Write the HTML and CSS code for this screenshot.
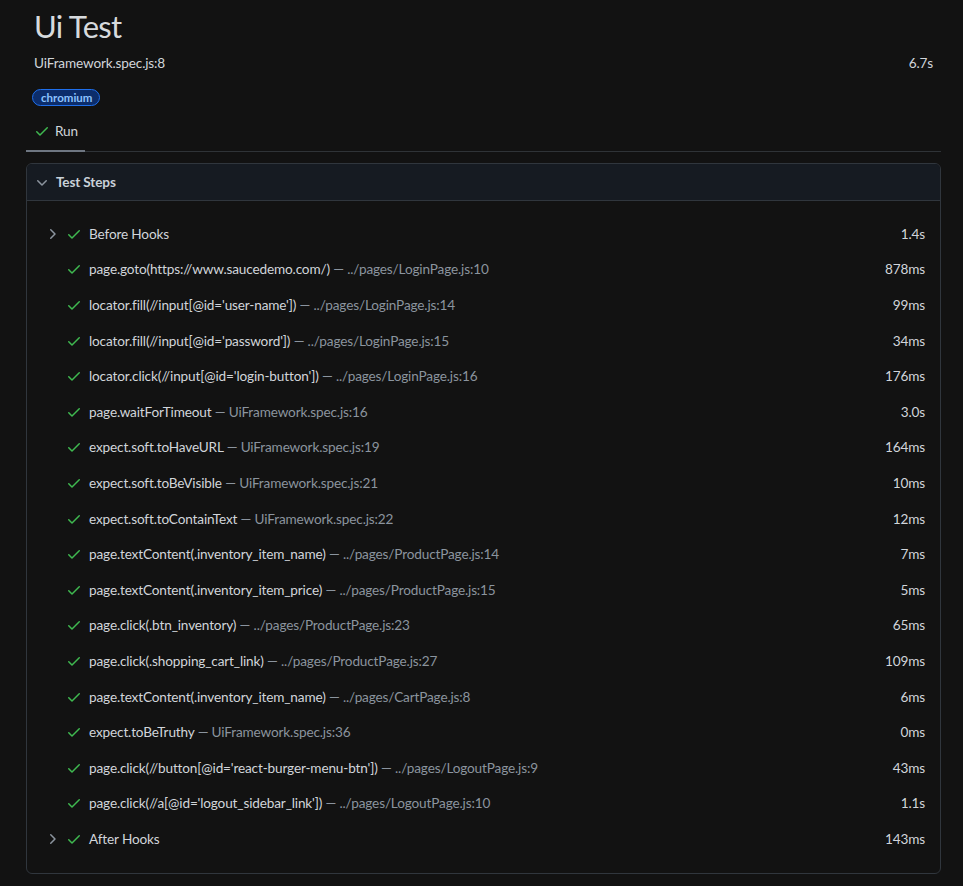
FILE: index.html
```html
<!DOCTYPE html>
<html lang="en">
<head>
<meta charset="utf-8">
<title>Ui Test</title>
<link rel="stylesheet" href="styles.css">
</head>
<body>
<div class="page">
  <div class="title">Ui Test</div>
  <div class="subtitle-row">
    <span class="location">UiFramework.spec.js:8</span>
    <span class="duration">6.7s</span>
  </div>
  <div class="labels"><span class="badge">chromium</span></div>
  <div class="tabs">
    <div class="tab selected">
      <svg class="icon check" viewBox="0 0 16 16" width="16" height="16"><path d="M13.78 4.22a.75.75 0 010 1.06l-7.250 7.25a.75.75 0 01-1.06 0L2.22 9.28a.75.75 0 011.06-1.06L6 10.94l6.72-6.72a.75.75 0 011.06 0z"/></svg>
      <span>Run</span>
    </div>
  </div>
  <div class="card">
    <div class="card-header">
      <svg class="icon chev" viewBox="0 0 16 16" width="16" height="16"><path d="M12.78 6.22a.75.75 0 010 1.06l-4.25 4.25a.75.75 0 01-1.06 0L3.22 7.28a.75.75 0 011.06-1.06L8 9.94l3.72-3.720a.75.75 0 011.06 0z"/></svg>
      <span>Test Steps</span>
    </div>
    <div class="card-body">
      <div class="step"><svg class="icon chev" viewBox="0 0 16 16" width="16" height="16"><path d="M6.22 3.22a.75.75 0 011.06 0l4.25 4.25a.75.75 0 010 1.06l-4.25 4.25a.75.75 0 01-1.06-1.06L9.94 8 6.22 4.28a.75.75 0 010-1.06z"/></svg><svg class="icon check" viewBox="0 0 16 16" width="16" height="16"><path d="M13.78 4.22a.75.75 0 010 1.06l-7.25 7.25a.75.75 0 01-1.06 0L2.22 9.28a.75.75 0 011.06-1.06L6 10.94l6.72-6.72a.75.75 0 011.06 0z"/></svg><span class="step-title">Before Hooks</span><span class="step-time">1.4s</span></div>
      <div class="step"><span class="spacer"></span><svg class="icon check" viewBox="0 0 16 16" width="16" height="16"><path d="M13.78 4.22a.75.75 0 010 1.06l-7.25 7.25a.75.75 0 01-1.06 0L2.22 9.28a.75.75 0 011.06-1.06L6 10.94l6.72-6.72a.75.75 0 011.06 0z"/></svg><span class="step-title">page.goto(https://www.saucedemo.com/)<span class="loc"> — ../pages/LoginPage.js:10</span></span><span class="step-time">878ms</span></div>
      <div class="step"><span class="spacer"></span><svg class="icon check" viewBox="0 0 16 16" width="16" height="16"><path d="M13.78 4.22a.75.75 0 010 1.06l-7.25 7.25a.75.75 0 01-1.06 0L2.22 9.28a.75.75 0 011.06-1.06L6 10.94l6.72-6.72a.75.75 0 011.06 0z"/></svg><span class="step-title">locator.fill(//input[@id='user-name'])<span class="loc"> — ../pages/LoginPage.js:14</span></span><span class="step-time">99ms</span></div>
      <div class="step"><span class="spacer"></span><svg class="icon check" viewBox="0 0 16 16" width="16" height="16"><path d="M13.78 4.22a.75.75 0 010 1.06l-7.25 7.25a.75.75 0 01-1.06 0L2.22 9.28a.75.75 0 011.06-1.06L6 10.94l6.72-6.72a.75.75 0 011.06 0z"/></svg><span class="step-title">locator.fill(//input[@id='password'])<span class="loc"> — ../pages/LoginPage.js:15</span></span><span class="step-time">34ms</span></div>
      <div class="step"><span class="spacer"></span><svg class="icon check" viewBox="0 0 16 16" width="16" height="16"><path d="M13.78 4.22a.75.75 0 010 1.06l-7.25 7.25a.75.75 0 01-1.06 0L2.22 9.28a.75.75 0 011.06-1.06L6 10.94l6.72-6.72a.75.75 0 011.06 0z"/></svg><span class="step-title">locator.click(//input[@id='login-button'])<span class="loc"> — ../pages/LoginPage.js:16</span></span><span class="step-time">176ms</span></div>
      <div class="step"><span class="spacer"></span><svg class="icon check" viewBox="0 0 16 16" width="16" height="16"><path d="M13.78 4.22a.75.75 0 010 1.06l-7.25 7.25a.75.75 0 01-1.06 0L2.22 9.28a.75.75 0 011.06-1.06L6 10.94l6.72-6.72a.75.75 0 011.06 0z"/></svg><span class="step-title">page.waitForTimeout<span class="loc"> — UiFramework.spec.js:16</span></span><span class="step-time">3.0s</span></div>
      <div class="step"><span class="spacer"></span><svg class="icon check" viewBox="0 0 16 16" width="16" height="16"><path d="M13.78 4.22a.75.75 0 010 1.06l-7.25 7.25a.75.75 0 01-1.06 0L2.22 9.28a.75.75 0 011.06-1.06L6 10.94l6.72-6.72a.75.75 0 011.06 0z"/></svg><span class="step-title">expect.soft.toHaveURL<span class="loc"> — UiFramework.spec.js:19</span></span><span class="step-time">164ms</span></div>
      <div class="step"><span class="spacer"></span><svg class="icon check" viewBox="0 0 16 16" width="16" height="16"><path d="M13.78 4.22a.75.75 0 010 1.06l-7.25 7.25a.75.75 0 01-1.06 0L2.22 9.28a.75.75 0 011.06-1.06L6 10.94l6.72-6.72a.75.75 0 011.06 0z"/></svg><span class="step-title">expect.soft.toBeVisible<span class="loc"> — UiFramework.spec.js:21</span></span><span class="step-time">10ms</span></div>
      <div class="step"><span class="spacer"></span><svg class="icon check" viewBox="0 0 16 16" width="16" height="16"><path d="M13.78 4.22a.75.75 0 010 1.06l-7.25 7.25a.75.75 0 01-1.06 0L2.22 9.28a.75.75 0 011.06-1.06L6 10.94l6.72-6.72a.75.75 0 011.06 0z"/></svg><span class="step-title">expect.soft.toContainText<span class="loc"> — UiFramework.spec.js:22</span></span><span class="step-time">12ms</span></div>
      <div class="step"><span class="spacer"></span><svg class="icon check" viewBox="0 0 16 16" width="16" height="16"><path d="M13.78 4.22a.75.75 0 010 1.06l-7.25 7.25a.75.75 0 01-1.06 0L2.22 9.28a.75.75 0 011.06-1.06L6 10.94l6.72-6.72a.75.75 0 011.06 0z"/></svg><span class="step-title">page.textContent(.inventory_item_name)<span class="loc"> — ../pages/ProductPage.js:14</span></span><span class="step-time">7ms</span></div>
      <div class="step"><span class="spacer"></span><svg class="icon check" viewBox="0 0 16 16" width="16" height="16"><path d="M13.78 4.22a.75.75 0 010 1.06l-7.25 7.25a.75.75 0 01-1.06 0L2.22 9.28a.75.75 0 011.06-1.06L6 10.94l6.72-6.72a.75.75 0 011.06 0z"/></svg><span class="step-title">page.textContent(.inventory_item_price)<span class="loc"> — ../pages/ProductPage.js:15</span></span><span class="step-time">5ms</span></div>
      <div class="step"><span class="spacer"></span><svg class="icon check" viewBox="0 0 16 16" width="16" height="16"><path d="M13.78 4.22a.75.75 0 010 1.06l-7.25 7.25a.75.75 0 01-1.06 0L2.22 9.28a.75.75 0 011.06-1.06L6 10.94l6.72-6.72a.75.75 0 011.06 0z"/></svg><span class="step-title">page.click(.btn_inventory)<span class="loc"> — ../pages/ProductPage.js:23</span></span><span class="step-time">65ms</span></div>
      <div class="step"><span class="spacer"></span><svg class="icon check" viewBox="0 0 16 16" width="16" height="16"><path d="M13.78 4.22a.75.75 0 010 1.06l-7.25 7.25a.75.75 0 01-1.06 0L2.22 9.28a.75.75 0 011.06-1.06L6 10.94l6.72-6.72a.75.75 0 011.06 0z"/></svg><span class="step-title">page.click(.shopping_cart_link)<span class="loc"> — ../pages/ProductPage.js:27</span></span><span class="step-time">109ms</span></div>
      <div class="step"><span class="spacer"></span><svg class="icon check" viewBox="0 0 16 16" width="16" height="16"><path d="M13.78 4.22a.75.75 0 010 1.06l-7.25 7.25a.75.75 0 01-1.06 0L2.22 9.28a.75.75 0 011.06-1.06L6 10.94l6.72-6.72a.75.75 0 011.06 0z"/></svg><span class="step-title">page.textContent(.inventory_item_name)<span class="loc"> — ../pages/CartPage.js:8</span></span><span class="step-time">6ms</span></div>
      <div class="step"><span class="spacer"></span><svg class="icon check" viewBox="0 0 16 16" width="16" height="16"><path d="M13.78 4.22a.75.75 0 010 1.06l-7.25 7.25a.75.75 0 01-1.06 0L2.22 9.28a.75.75 0 011.06-1.06L6 10.94l6.72-6.72a.75.75 0 011.06 0z"/></svg><span class="step-title">expect.toBeTruthy<span class="loc"> — UiFramework.spec.js:36</span></span><span class="step-time">0ms</span></div>
      <div class="step"><span class="spacer"></span><svg class="icon check" viewBox="0 0 16 16" width="16" height="16"><path d="M13.78 4.22a.75.75 0 010 1.06l-7.25 7.25a.75.75 0 01-1.06 0L2.22 9.28a.75.75 0 011.06-1.06L6 10.94l6.72-6.72a.75.75 0 011.06 0z"/></svg><span class="step-title">page.click(//button[@id='react-burger-menu-btn'])<span class="loc"> — ../pages/LogoutPage.js:9</span></span><span class="step-time">43ms</span></div>
      <div class="step"><span class="spacer"></span><svg class="icon check" viewBox="0 0 16 16" width="16" height="16"><path d="M13.78 4.22a.75.75 0 010 1.06l-7.25 7.25a.75.75 0 01-1.06 0L2.22 9.28a.75.75 0 011.06-1.06L6 10.94l6.72-6.72a.75.75 0 011.06 0z"/></svg><span class="step-title">page.click(//a[@id='logout_sidebar_link'])<span class="loc"> — ../pages/LogoutPage.js:10</span></span><span class="step-time">1.1s</span></div>
      <div class="step"><svg class="icon chev" viewBox="0 0 16 16" width="16" height="16"><path d="M6.22 3.22a.75.75 0 011.06 0l4.25 4.25a.75.75 0 010 1.06l-4.25 4.25a.75.75 0 01-1.06-1.06L9.94 8 6.22 4.28a.75.75 0 010-1.06z"/></svg><svg class="icon check" viewBox="0 0 16 16" width="16" height="16"><path d="M13.78 4.22a.75.75 0 010 1.06l-7.25 7.25a.75.75 0 01-1.06 0L2.22 9.28a.75.75 0 011.06-1.06L6 10.94l6.72-6.72a.75.75 0 011.06 0z"/></svg><span class="step-title">After Hooks</span><span class="step-time">143ms</span></div>
    </div>
  </div>
</div>
</body>
</html>
```
FILE: styles.css
```css
* { box-sizing: border-box; }
html, body {
  margin: 0;
  background: #121212;
}
body {
  font-family: Lato, "Noto Sans", sans-serif;
  font-size: 13.6px;
  letter-spacing: -0.15px;
  color: #d1d5da;
}
.page {
  padding: 6px 22px 0 26px;
}
.title {
  font-size: 31px;
  letter-spacing: -0.7px;
  line-height: 40px;
  padding-left: 8px;
  color: #d7dadd;
}
.subtitle-row {
  margin-top: 7px;
  height: 20px;
  line-height: 20px;
  display: flex;
  justify-content: space-between;
  padding: 0 8px;
}
.labels {
  margin-top: 16px;
  padding-left: 6px;
  display: flex;
}
.badge {
  height: 17px;
  line-height: 15px;
  padding: 0 7px 0 8px;
  border-radius: 9px;
  border: 1px solid #1f6feb;
  background: #0c2d6b;
  color: #8cc3ff;
  font-size: 11.5px;
  letter-spacing: 0;
  font-weight: 700;
}
.tabs {
  margin-top: 8px;
  display: flex;
  border-bottom: 1px solid #2f3337;
}
.tab {
  height: 38px;
  margin-bottom: -1px;
  display: flex;
  align-items: center;
  gap: 5px;
  padding: 0 7px 3px 8px;
  border-bottom: 2px solid #6e7681;
}
.icon { flex: none; display: block; }
.check { fill: #3fb950; }
.chev { fill: #8b949e; }
.card {
  margin-top: 11px;
  border: 1px solid #30363d;
  border-radius: 6px;
  overflow: hidden;
}
.card-header {
  height: 37px;
  background: #161b22;
  border-bottom: 1px solid #30363d;
  display: flex;
  align-items: center;
  gap: 6px;
  padding-left: 7px;
  font-weight: 700;
  color: #c9d1d9;
}
.card-body {
  padding: 15px 0 16px;
}
.step {
  height: 35.6px;
  display: flex;
  align-items: center;
  padding: 0 15px 0 17px;
  gap: 6px;
  white-space: nowrap;
}
.spacer { width: 16px; flex: none; }
.step-title {
  flex: 1;
  margin-left: 1px;
  color: #d1d5da;
}
.loc { color: #8b949e; }
.step-time { color: #d1d5da; }
```
